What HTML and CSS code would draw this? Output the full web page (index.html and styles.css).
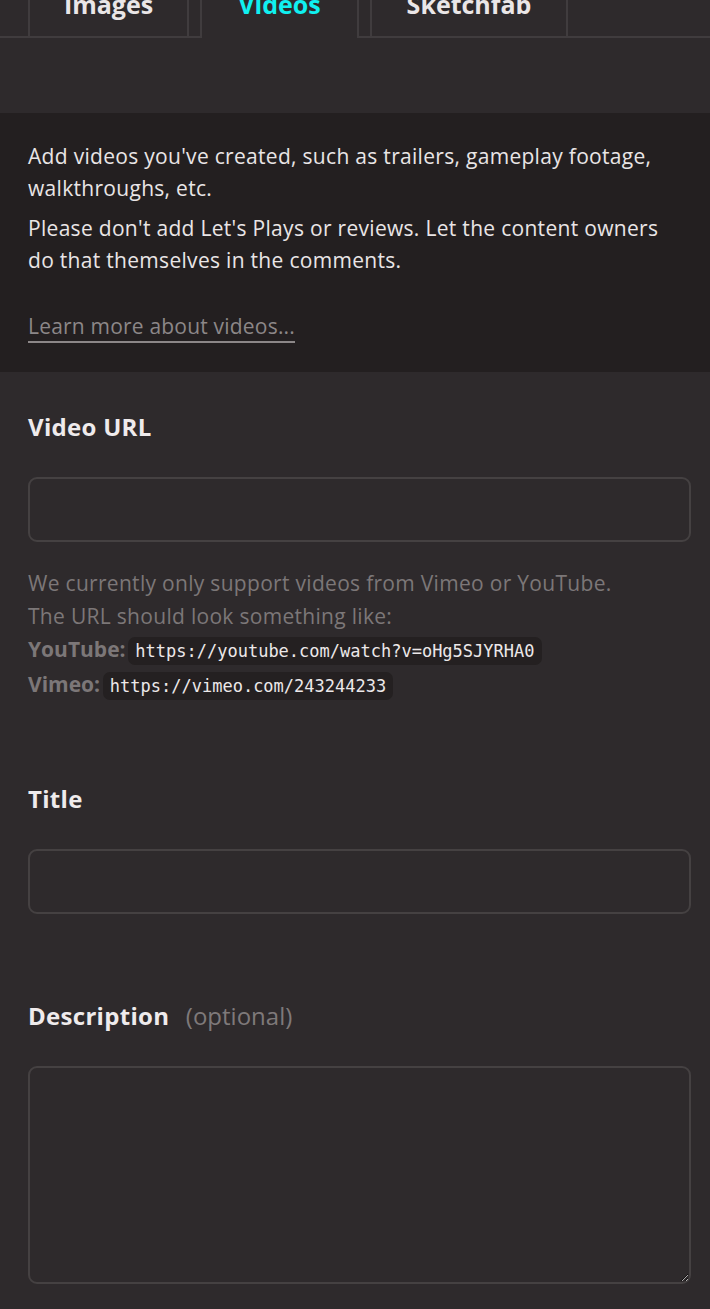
FILE: index.html
```html
<!DOCTYPE html>
<html>
<head>
<meta charset="utf-8">
<link rel="stylesheet" href="styles.css">
</head>
<body>
<div class="page">
  <div class="tabs">
    <div class="tab-spacer"></div>
    <div class="tab">Images</div>
    <div class="tab active">Videos</div>
    <div class="tab wide">Sketchfab</div>
  </div>
  <div class="tab-pad"></div>
  <div class="info">
    <p>Add videos you've created, such as trailers, gameplay footage, walkthroughs, etc.</p>
    <p>Please don't add Let's Plays or reviews. Let the content owners do that themselves in the comments.</p>
    <a class="learn" href="#">Learn more about videos...</a>
  </div>
  <form class="form">
    <div class="field">
      <label class="label">Video URL</label>
      <input class="input" type="text">
      <div class="help">
        <div>We currently only support videos from Vimeo or YouTube.</div>
        <div>The URL should look something like:</div>
        <div><strong>YouTube:</strong> <code>https://youtube.com/watch?v=oHg5SJYRHA0</code></div>
        <div><strong>Vimeo:</strong> <code>https://vimeo.com/243244233</code></div>
      </div>
    </div>
    <div class="field field-spaced">
      <label class="label">Title</label>
      <input class="input" type="text">
    </div>
    <div class="field">
      <label class="label">Description <span class="opt">(optional)</span></label>
      <textarea class="textarea"></textarea>
    </div>
  </form>
</div>
</body>
</html>
```

FILE: styles.css
```css
html, body {
  margin: 0;
  padding: 0;
  background: #2e2a2c;
}
body {
  font-family: "Open Sans", Lato, sans-serif;
  color: #e9e5e6;
}
.page {
  width: 710px;
  overflow: hidden;
}
.tabs {
  display: flex;
  height: 36px;
  border-bottom: 2px solid #403c3e;
  gap: 11px;
}
.tab-spacer {
  width: 17px;
  flex: none;
}
.tab {
  flex: none;
  width: 161px;
  box-sizing: border-box;
  border-left: 2px solid #403c3e;
  border-right: 2px solid #403c3e;
  font-family: "Open Sans", sans-serif;
  font-weight: 700;
  font-size: 25px;
  line-height: 1;
  text-align: center;
  color: #eae6e7;
  margin-top: -8px;
  height: 44px;
}
.tab.active {
  color: #10f0f0;
  height: 46px;
  background: #2e2a2c;
  width: 159px;
}
.tab.wide {
  width: 198px;
}
.tab-pad {
  height: 75px;
}
.info {
  background: #231f20;
  padding: 27px 28px 29px 28px;
}
.info p {
  margin: 0 0 8px;
  font-size: 21px;
  line-height: 32px;
  letter-spacing: 0.3px;
  color: #e9e5e6;
}
.learn {
  display: inline-block;
  margin-top: 27px;
  font-size: 21px;
  line-height: 30px;
  letter-spacing: 0.2px;
  color: #8c8788;
  text-decoration: none;
  border-bottom: 2px solid #8c8788;
}
.form {
  padding: 38px 19px 0 28px;
}
.field {
  margin-bottom: 79px;
}
.field-spaced {
  margin-bottom: 85px;
}
.label {
  display: block;
  font-weight: 700;
  font-size: 24px;
  line-height: 34px;
  letter-spacing: 0.3px;
  color: #efebec;
  margin-bottom: 33px;
}
.opt {
  font-weight: 400;
  color: #7e797a;
  margin-left: 10px;
  letter-spacing: 0;
}
.input, .textarea {
  display: block;
  width: 100%;
  box-sizing: border-box;
  height: 65px;
  background: #2e2a2c;
  border: 2px solid #454142;
  border-radius: 9px;
  outline: none;
  color: #e9e5e6;
  font-size: 20px;
  padding: 10px 14px;
}
.textarea {
  height: 218px;
  resize: vertical;
  font-family: inherit;
}
.help {
  margin-top: 25px;
  font-size: 21px;
  line-height: 33px;
  letter-spacing: 0.3px;
  color: #7c7778;
}
.help strong {
  font-weight: 700;
  letter-spacing: 0;
  color: #7c7778;
}
.help code {
  font-family: "DejaVu Sans Mono", monospace;
  font-size: 17px;
  letter-spacing: 0;
  color: #ece8e9;
  background: #242021;
  border-radius: 7px;
  padding: 4px 7px;
  margin-left: -3px;
}
```
